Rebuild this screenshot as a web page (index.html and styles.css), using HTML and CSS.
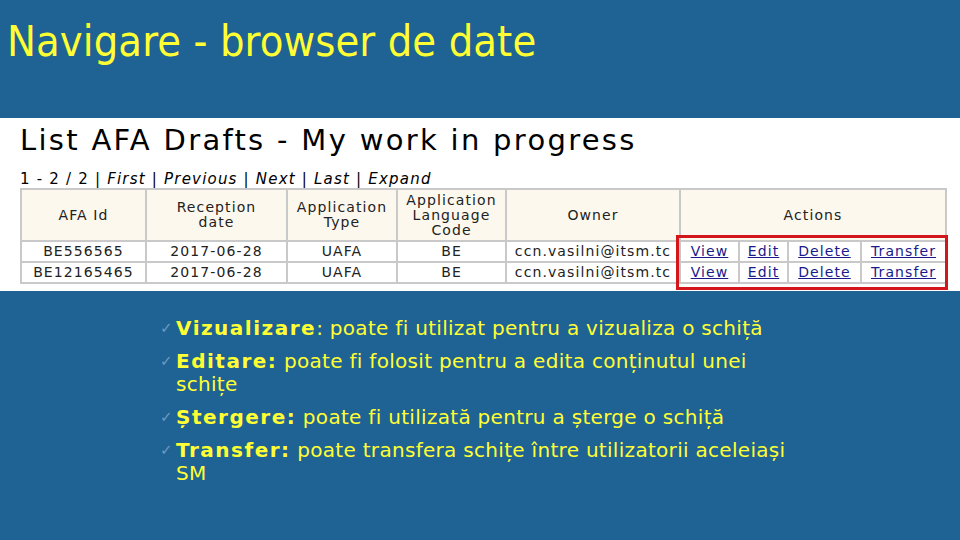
FILE: index.html
```html
<!DOCTYPE html>
<html lang="ro">
<head>
<meta charset="utf-8">
<link rel="stylesheet" href="styles.css">
</head>
<body>
<header class="top">
  <h1 class="title">Navigare - browser de date</h1>
</header>
<section class="shot">
  <h2 class="shot-title">List AFA Drafts - My work in progress</h2>
  <div class="pager">1 - 2 / 2 | <i>First</i> | <i>Previous</i> | <i>Next</i> | <i>Last</i> | <i>Expand</i></div>
  <div class="table-wrap">
    <table class="grid">
      <colgroup>
        <col class="c1"><col class="c2"><col class="c3"><col class="c4"><col class="c5">
        <col class="c6"><col class="c7"><col class="c8"><col class="c9">
      </colgroup>
      <thead>
        <tr>
          <th>AFA Id</th>
          <th>Reception<br>date</th>
          <th>Application<br>Type</th>
          <th>Application<br>Language<br>Code</th>
          <th>Owner</th>
          <th colspan="4">Actions</th>
        </tr>
      </thead>
      <tbody>
        <tr>
          <td>BE556565</td><td>2017-06-28</td><td>UAFA</td><td>BE</td><td>ccn.vasilni@itsm.tc</td>
          <td><a>View</a></td><td><a>Edit</a></td><td><a>Delete</a></td><td><a>Transfer</a></td>
        </tr>
        <tr>
          <td>BE12165465</td><td>2017-06-28</td><td>UAFA</td><td>BE</td><td>ccn.vasilni@itsm.tc</td>
          <td><a>View</a></td><td><a>Edit</a></td><td><a>Delete</a></td><td><a>Transfer</a></td>
        </tr>
      </tbody>
    </table>
    <div class="highlight"></div>
  </div>
</section>
<ul class="points">
  <li><span class="check">✓</span><span class="txt"><b>Vizualizare</b>: poate fi utilizat pentru a vizualiza o schiță</span></li>
  <li><span class="check">✓</span><span class="txt"><b>Editare:</b> poate fi folosit pentru a edita conținutul unei<br>schițe</span></li>
  <li><span class="check">✓</span><span class="txt"><b>Ștergere:</b> poate fi utilizată pentru a șterge o schiță</span></li>
  <li><span class="check">✓</span><span class="txt"><b>Transfer:</b> poate transfera schițe între utilizatorii aceleiași<br>SM</span></li>
</ul>
</body>
</html>
```

FILE: styles.css
```css
* { box-sizing: border-box; }
html, body { margin: 0; padding: 0; }
body {
  width: 960px;
  height: 540px;
  overflow: hidden;
  background: #1f6294;
  font-family: "DejaVu Sans", Verdana, sans-serif;
}
.top {
  height: 118px;
  padding: 15px 0 0 7px;
}
.title {
  margin: 0;
  font-family: "DejaVu Sans Condensed", "DejaVu Sans", sans-serif;
  font-weight: normal;
  font-size: 43px;
  line-height: 52px;
  color: #ffff33;
  letter-spacing: 0.1px;
}
.shot {
  background: #ffffff;
  height: 173px;
  padding: 2px 0 0 20px;
}
.shot-title {
  margin: 0;
  font-weight: normal;
  font-size: 29px;
  line-height: 40px;
  color: #000;
  letter-spacing: 2.3px;
}
.pager {
  margin-top: 10px;
  font-size: 15px;
  line-height: 18px;
  color: #000;
  letter-spacing: 1.2px;
}
.pager i { font-style: italic; }
.table-wrap {
  position: relative;
  width: 925px;
}
.grid {
  border-collapse: collapse;
  table-layout: fixed;
  width: 925px;
  font-size: 14px;
  letter-spacing: 1.1px;
  color: #222;
}
.c1 { width: 125px; } .c2 { width: 141px; } .c3 { width: 110px; }
.c4 { width: 109px; } .c5 { width: 174px; } .c6 { width: 59px; }
.c7 { width: 49px; } .c8 { width: 73px; } .c9 { width: 85px; }
.grid th, .grid td {
  border: 2px solid #c9c9c9;
  text-align: center;
  padding: 0;
  white-space: nowrap;
  overflow: hidden;
}
.grid th {
  background: #fdf8ee;
  font-weight: normal;
  height: 52px;
  line-height: 15px;
}
.grid td {
  background: #fff;
  height: 21px;
  line-height: 17px;
}
.grid a {
  color: #1a1a8c;
  text-decoration: underline;
}
.highlight {
  position: absolute;
  left: 656px;
  top: 47px;
  width: 272px;
  height: 55px;
  border: 3px solid #d3161c;
}
.points {
  list-style: none;
  margin: 0;
  padding: 26px 0 0 160px;
  font-family: "DejaVu Sans", sans-serif;
  font-size: 20px;
  line-height: 23px;
  letter-spacing: 0.3px;
  color: #ffff33;
}
.points li {
  display: flex;
  margin-bottom: 10px;
}
.check {
  width: 16px;
  flex: none;
  color: #6f99be;
  font-size: 15px;
  letter-spacing: 0;
}
.points b {
  font-weight: bold;
  letter-spacing: 1.5px;
}
```
